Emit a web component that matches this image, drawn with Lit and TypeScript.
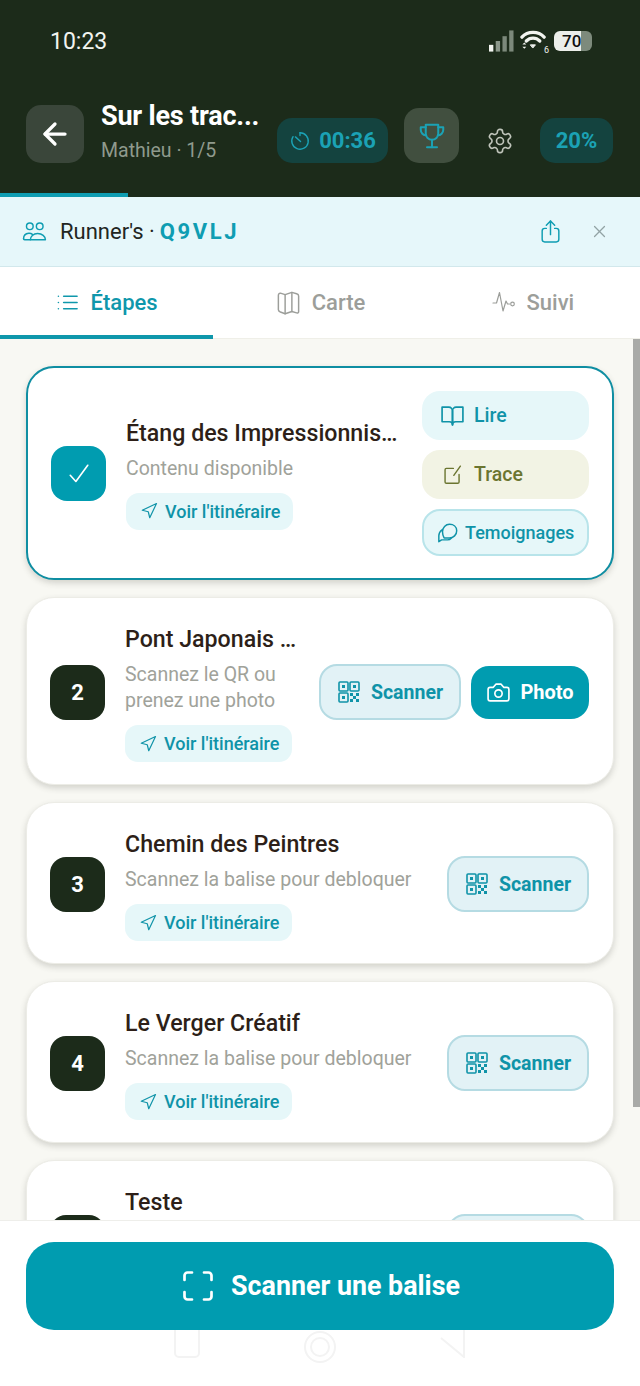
import { LitElement, html, css, svg, nothing } from 'lit';
import { customElement } from 'lit/decorators.js';

const icons: Record<string, unknown> = {
  back: svg`<path d="M20 12H4"/><path d="M12 20l-8-8 8-8"/>`,
  timer: svg`<path d="M12 3a9 9 0 1 1-7.6 4.2"/><path d="M12 3v3"/><path d="M12.6 12.6 7 7.5"/>`,
  trophy: svg`<path d="M7 3h10v7a5 5 0 0 1-10 0z"/><path d="M7 5H3v2a4.5 4.5 0 0 0 4.4 4.5"/><path d="M17 5h4v2a4.5 4.5 0 0 1-4.4 4.5"/><path d="M12 15v6"/><path d="M8 21h8"/>`,
  gear: svg`<path d="M12.22 2h-.44a2 2 0 0 0-2 2v.18a2 2 0 0 1-1 1.73l-.43.25a2 2 0 0 1-2 0l-.15-.08a2 2 0 0 0-2.73.73l-.22.38a2 2 0 0 0 .73 2.73l.15.1a2 2 0 0 1 1 1.72v.51a2 2 0 0 1-1 1.74l-.15.09a2 2 0 0 0-.73 2.73l.22.38a2 2 0 0 0 2.73.73l.15-.08a2 2 0 0 1 2 0l.43.25a2 2 0 0 1 1 1.73V20a2 2 0 0 0 2 2h.44a2 2 0 0 0 2-2v-.18a2 2 0 0 1 1-1.73l.43-.25a2 2 0 0 1 2 0l.15.08a2 2 0 0 0 2.73-.73l.22-.39a2 2 0 0 0-.73-2.73l-.15-.08a2 2 0 0 1-1-1.74v-.5a2 2 0 0 1 1-1.74l.15-.09a2 2 0 0 0 .73-2.73l-.22-.38a2 2 0 0 0-2.73-.73l-.15.08a2 2 0 0 1-2 0l-.43-.25a2 2 0 0 1-1-1.73V4a2 2 0 0 0-2-2z"/><circle cx="12" cy="12" r="3"/>`,
  users: svg`<circle cx="7.5" cy="7" r="3.2"/><circle cx="17" cy="7" r="3.2"/><path d="M1.5 19c0-2.5 1.5-5 5-5.3 1.6-.1 2.6.3 3.5 1"/><path d="M8 20c0-3.2 2.8-6 7-6s7.5 2.6 7.5 6z"/><path d="M1.5 19c0 .6.4 1 1 1H8"/>`,
  share: svg`<path d="M8 9H6.500A2.500 2.500 0 0 0 4 11.500v8A2.500 2.500 0 0 0 6.500 22h11a2.500 2.500 0 0 0 2.500-2.500v-8A2.500 2.500 0 0 0 17.500 9H16"/><path d="M12 15V2"/><path d="M8 6l4-4 4 4"/>`,
  close: svg`<path d="M5 5l14 14"/><path d="M19 5 5 19"/>`,
  list: svg`<path d="M8 5.500h14"/><path d="M8 12h14"/><path d="M8 18.500h14"/><path d="M2.500 5.500h.01"/><path d="M2.500 12h.01"/><path d="M2.500 18.500h.01"/>`,
  map: svg`<path d="M3 5.500c0-1 .8-2 1.800-1.800L9 5l6-2 4.200 1.200c1 .3 1.800 1 1.800 2v14c0 1-.8 1.300-1.800 1L15 20l-6 2-4.200-1.500C3.800 20.100 3 19.500 3 18.500z"/><path d="M9 5v17"/><path d="M15 3v17"/>`,
  pulse: svg`<path d="M1 13h3.500L7.500 2.500 11 21l3-10 1.500 3h2"/><circle cx="20.500" cy="14" r="1.800"/>`,
  check: svg`<path d="M5 13l4.500 5L19 5"/>`,
  book: svg`<path d="M2 4h6.500A3.500 3.500 0 0 1 12 7.500V21a3 3 0 0 0-3-3H2z"/><path d="M22 4h-6.500A3.500 3.500 0 0 0 12 7.500V21a3 3 0 0 1 3-3h7z"/>`,
  note: svg`<path d="M13 5H5a1.500 1.500 0 0 0-1.500 1.500v14A1.500 1.500 0 0 0 5 22h13a1.500 1.500 0 0 0 1.500-1.500V12"/><path d="M21 2.500 13.500 13"/>`,
  chat: svg`<path d="M21.500 9.500c0 4.400-3.600 8-8 8H7.800C7 15.900 6 14 6 10.500c0-4.400 3.400-8 7.700-8s7.800 2.600 7.800 7z"/><path d="M5.500 8.500C3.400 10 2 12.200 2 15v6.500l3-2h6.500c1.500 0 3-.6 4-1.800"/>`,
  nav: svg`<path d="M3 11 22 2l-9 19-2-8z"/>`,
  camera: svg`<path d="M14.500 4h-5L7 7H4a2 2 0 0 0-2 2v9a2 2 0 0 0 2 2h16a2 2 0 0 0 2-2V9a2 2 0 0 0-2-2h-3z"/><circle cx="12" cy="13" r="3.500"/>`,
  qr: svg`<rect x="2" y="2" width="9" height="9" rx="1"/><rect x="13" y="2" width="9" height="9" rx="1"/><rect x="2" y="13" width="9" height="9" rx="1"/><g fill="currentColor" stroke="none"><rect x="5" y="5" width="3" height="3"/><rect x="16" y="5" width="3" height="3"/><rect x="5" y="16" width="3" height="3"/><rect x="13" y="13" width="3" height="3"/><rect x="19" y="13" width="3" height="3"/><rect x="16" y="16" width="3" height="3"/><rect x="13" y="19" width="3" height="3"/><rect x="19" y="19" width="3" height="3"/></g>`,
  scan: svg`<path d="M3 8V5a2 2 0 0 1 2-2h3"/><path d="M16 3h3a2 2 0 0 1 2 2v3"/><path d="M21 16v3a2 2 0 0 1-2 2h-3"/><path d="M8 21H5a2 2 0 0 1-2-2v-3"/>`,
};

function icon(name: string, size: number, weight = 1.6) {
  return html`<svg class="icon" width=${size} height=${size} viewBox="0 0 24 24" fill="none" stroke="currentColor"
    stroke-width=${weight} stroke-linecap="round" stroke-linejoin="round">${icons[name]}</svg>`;
}

interface Step {
  badge: string;
  title: string;
  sub: string;
  done?: boolean;
  photo?: boolean;
  // last card runs under the footer, only its title shows
  cut?: boolean;
}

const steps: Step[] = [
  { badge: '1', title: 'Étang des Impressionnis…', sub: 'Contenu disponible', done: true },
  { badge: '2', title: 'Pont Japonais …', sub: 'Scannez le QR ou prenez une photo', photo: true },
  { badge: '3', title: 'Chemin des Peintres', sub: 'Scannez la balise pour debloquer' },
  { badge: '4', title: 'Le Verger Créatif', sub: 'Scannez la balise pour debloquer' },
  { badge: '', title: 'Teste', sub: '', cut: true },
];

@customElement('app-root')
export class AppRoot extends LitElement {
  static override styles = css`
    :host {
      display: flex;
      flex-direction: column;
      width: 640px;
      height: 1386px;
      overflow: hidden;
      background: #fff;
      font-family: Roboto, 'Noto Sans', sans-serif;
      color: #2d1f18;
    }
    .icon { flex: none; display: block; }

    .header { background: #1c2b1a; color: #fff; height: 193px; flex: none; }
    .status {
      height: 82px;
      padding: 0 48px 0 50px;
      display: flex;
      align-items: center;
      justify-content: space-between;
      font-size: 23px;
      color: #f2f4f0;
    }
    .status-icons { display: flex; align-items: center; gap: 6px; }
    .wifi { position: relative; width: 28px; height: 24px; }
    .wifi i { position: absolute; right: -1px; bottom: -2px; font-size: 9px; font-style: normal; line-height: 10px; }
    .battery {
      width: 38px;
      height: 20px;
      border-radius: 6px;
      background: linear-gradient(90deg, #eceeea 70%, #7d8a7c 70%);
      color: #111;
      font-size: 17px;
      font-weight: 500;
      line-height: 20px;
      padding-left: 8px;
      box-sizing: border-box;
    }
    .topbar {
      margin-top: 18px;
      height: 63px;
      padding: 0 26px;
      display: flex;
      align-items: flex-end;
    }
    .back {
      width: 58px;
      height: 58px;
      border-radius: 15px;
      background: #3a463a;
      display: flex;
      align-items: center;
      justify-content: center;
      flex: none;
    }
    .heading { width: 176px; margin-left: 17px; flex: none; align-self: stretch; }
    .heading b { display: block; font-size: 27px; font-weight: 700; line-height: 32px; white-space: nowrap; letter-spacing: -0.2px; }
    .heading span { display: block; font-size: 19.5px; line-height: 24px; margin-top: 7px; color: #8f9a8d; white-space: nowrap; }
    .chip {
      height: 45px;
      border-radius: 15px;
      background: #14433f;
      color: #1ba2b5;
      font-size: 22px;
      font-weight: 700;
      display: flex;
      align-items: center;
      justify-content: center;
      flex: none;
    }
    .timer { width: 111px; gap: 8px; }
    .pct { width: 73px; }
    .trophy {
      width: 55px;
      height: 55px;
      margin-left: 16px;
      border-radius: 15px;
      background: #414f3f;
      color: #1ba2b5;
      display: flex;
      align-items: center;
      justify-content: center;
      flex: none;
    }
    .gear { width: 81px; height: 45px; display: flex; align-items: center; justify-content: center; color: #bfc4ba; flex: none; }

    .progress { height: 4px; background: #1c2b1a; flex: none; }
    .progress div { width: 128px; height: 100%; background: #0f9db2; }

    .group {
      height: 70px;
      flex: none;
      box-sizing: border-box;
      background: #e6f7fa;
      border-bottom: 1px solid #d2e8ec;
      padding: 0 32px 0 22px;
      display: flex;
      align-items: center;
      font-size: 22px;
      color: #22261f;
    }
    .group .users { color: #0f9db2; margin-right: 13px; }
    .code { color: #0f9db2; font-weight: 700; letter-spacing: 2.6px; margin-left: 5px; }
    .group .share { margin-left: auto; color: #0f9db2; }
    .group .close { margin-left: 28px; color: #92a3a4; }

    .tabs { height: 72px; flex: none; display: grid; grid-template-columns: repeat(3, 1fr); border-bottom: 1px solid #efefe8; box-sizing: border-box; background: #fff; }
    .tab {
      display: flex;
      align-items: center;
      justify-content: center;
      gap: 10px;
      font-size: 22px;
      font-weight: 500;
      color: #9c9e9a;
      border-bottom: 4px solid transparent;
      padding-top: 2px;
      margin-bottom: -1px;
    }
    .tab.on { color: #0f97ab; border-bottom-color: #0f97ab; gap: 12px; }

    .content {
      flex: 1;
      min-height: 0;
      overflow: hidden;
      position: relative;
      background: #f8f8f3;
      padding: 27px 26px 0;
      display: flex;
      flex-direction: column;
      gap: 17px;
    }
    .scrollbar { position: absolute; top: 0; right: 0; width: 7px; height: 768px; background: #a9aaa7; }

    .card {
      flex: none;
      box-sizing: border-box;
      background: #fff;
      border: 1px solid #ecece6;
      border-radius: 28px;
      box-shadow: 0 3px 6px rgba(60, 60, 50, 0.2);
      padding: 24px 24px 22px 23px;
      display: flex;
      align-items: center;
    }
    .card.done { border: 2px solid #0f8ea2; padding: 23px 23px 22px; }
    .badge {
      width: 55px;
      height: 55px;
      border-radius: 16px;
      background: #1c2b1a;
      color: #fff;
      font-size: 22px;
      font-weight: 700;
      display: flex;
      align-items: center;
      justify-content: center;
      flex: none;
      margin-right: 20px;
    }
    .done .badge { background: #009cb0; }
    .info { flex: 1; min-width: 0; }
    .done .info { margin-top: -2px; }
    .cut .info { height: 114px; }
    .title { font-size: 23.200px; font-weight: 500; line-height: 35px; white-space: nowrap; }
    .sub { font-size: 19.500px; line-height: 26px; color: #a0a29a; margin-top: 5px; }
    .route {
      display: flex;
      width: fit-content;
      align-items: center;
      gap: 7px;
      height: 37px;
      box-sizing: border-box;
      padding: 0 13px 0 14px;
      margin-top: 11px;
      border-radius: 13px;
      background: #e6f7f9;
      color: #0f93a8;
      font-size: 18px;
      font-weight: 500;
      white-space: nowrap;
    }
    .actions { display: flex; gap: 10px; flex: none; align-items: center; margin-left: 18px; }
    .actions.stack { flex-direction: column; width: 167px; }
    .btn {
      display: flex;
      align-items: center;
      justify-content: center;
      box-sizing: border-box;
      font-size: 19.500px;
      font-weight: 700;
      white-space: nowrap;
    }
    .scanner {
      width: 142px;
      height: 56px;
      gap: 10px;
      border: 2px solid #b5dbe3;
      border-radius: 18px;
      background: #e2f2f6;
      color: #0f93a8;
    }
    .photo { width: 118px; height: 53px; gap: 9px; border-radius: 18px; background: #009cb0; color: #fff; font-size: 20px; }
    .wide { width: 167px; height: 49px; border-radius: 18px; justify-content: flex-start; padding-left: 18px; gap: 9px; font-weight: 500; }
    .read { background: #e6f7f9; color: #0f93a8; }
    .trace { background: #f2f3e4; color: #6b7530; padding-left: 20px; gap: 11px; }
    .stories { height: 47px; background: #e6f7f9; color: #0f93a8; border: 2px solid #b8e4ea; padding-left: 13px; gap: 6px; font-size: 18px; }

    .footer { flex: none; height: 166px; box-sizing: border-box; background: #fff; border-top: 1px solid #eeeeea; padding: 21px 26px 0; position: relative; }
    .cta {
      height: 88px;
      border-radius: 28px;
      background: #009cb0;
      color: #fff;
      font-size: 26.800px;
      font-weight: 700;
      display: flex;
      align-items: center;
      justify-content: center;
      gap: 15px;
    }
    .sysnav { display: flex; height: 34px; justify-content: space-between; padding: 0 148px; align-items: flex-start; color: #f3f3f3; }
  `;

  private renderActions(step: Step) {
    if (step.done) {
      return html`<div class="actions stack">
        <div class="btn wide read">${icon('book', 25)}Lire</div>
        <div class="btn wide trace">${icon('note', 21)}Trace</div>
        <div class="btn wide stories">${icon('chat', 22)}Temoignages</div>
      </div>`;
    }
    return html`<div class="actions">
      <div class="btn scanner">${step.cut ? nothing : html`${icon('qr', 24)}Scanner`}</div>
      ${step.photo ? html`<div class="btn photo">${icon('camera', 25)}Photo</div>` : nothing}
    </div>`;
  }

  private renderStep(step: Step) {
    return html`<div class="card ${step.done ? 'done' : ''} ${step.cut ? 'cut' : ''}">
      <div class="badge">${step.done ? icon('check', 30, 1.3) : step.badge}</div>
      <div class="info">
        <div class="title">${step.title}</div>
        ${step.cut
          ? nothing
          : html`<div class="sub">${step.sub}</div>
              <div class="route">${icon('nav', 18)}Voir l'itinéraire</div>`}
      </div>
      ${this.renderActions(step)}
    </div>`;
  }

  protected override render() {
    return html`
      <div class="header">
        <div class="status">
          <span>10:23</span>
          <div class="status-icons">
            <svg width="25" height="22" viewBox="0 0 26 22">
              <rect x="0" y="15" width="4.500" height="7" fill="#f2f4f0"/>
              <rect x="7" y="11" width="4.500" height="11" fill="#8b978a"/>
              <rect x="14" y="6" width="4.500" height="16" fill="#7c897b"/>
              <rect x="21" y="0" width="4.500" height="22" fill="#7c897b"/>
            </svg>
            <div class="wifi">
              <svg width="28" height="24" viewBox="0 0 29 24" fill="none" stroke="#f2f4f0" stroke-width="3.400" stroke-linecap="round">
                <path d="M2 8C8 1.500 19 1.500 25 8"/>
                <path d="M6.500 12c4-4 10-4 14 0"/>
                <path d="M11 16h5l-2.500 3z" fill="#f2f4f0" stroke-width="1"/>
                <path d="M2.500 15.500l2-2 2 2zM2.500 18l2 2 2-2z" fill="#f2f4f0" stroke="none"/>
              </svg>
              <i>6</i>
            </div>
            <div class="battery">70</div>
          </div>
        </div>
        <div class="topbar">
          <div class="back">${icon('back', 30, 2.6)}</div>
          <div class="heading"><b>Sur les trac...</b><span>Mathieu · 1/5</span></div>
          <div class="chip timer">${icon('timer', 22, 1.5)}00:36</div>
          <div class="trophy">${icon('trophy', 30, 1.6)}</div>
          <div class="gear">${icon('gear', 28, 1.4)}</div>
          <div class="chip pct">20%</div>
        </div>
      </div>
      <div class="progress"><div></div></div>
      <div class="group">
        <span class="users">${icon('users', 25, 1.4)}</span>
        <span>Runner's ·</span><span class="code">Q9VLJ</span>
        <span class="share">${icon('share', 25, 1.4)}</span>
        <span class="close">${icon('close', 17, 1.8)}</span>
      </div>
      <div class="tabs">
        <div class="tab on">${icon('list', 23)}Étapes</div>
        <div class="tab">${icon('map', 27, 1.3)}Carte</div>
        <div class="tab">${icon('pulse', 24, 1.2)}Suivi</div>
      </div>
      <div class="content">
        ${steps.map((s) => this.renderStep(s))}
        <div class="scrollbar"></div>
      </div>
      <div class="footer">
        <div class="cta">${icon('scan', 36, 1.8)}Scanner une balise</div>
        <div class="sysnav">
          <svg width="26" height="28" viewBox="0 0 26 28" fill="none" stroke="currentColor" stroke-width="2"><path d="M1 0v23a4 4 0 0 0 4 4h16a4 4 0 0 0 4-4V0"/></svg>
          <svg width="34" height="34" viewBox="0 0 34 34" fill="none" stroke="currentColor" stroke-width="2"><circle cx="17" cy="17" r="15"/><circle cx="17" cy="17" r="9"/></svg>
          <svg width="26" height="28" viewBox="0 0 26 28" fill="none" stroke="currentColor" stroke-width="2"><path d="M1 8l23 19V0"/></svg>
        </div>
      </div>
    `;
  }
}
